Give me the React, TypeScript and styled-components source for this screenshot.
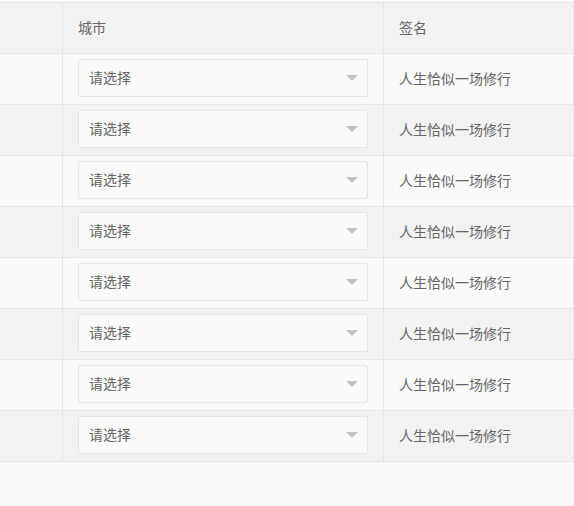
import React from 'react';
import styled, { createGlobalStyle } from 'styled-components';

const borderColor = '#e6e6e6';
const textColor = '#666';

const GlobalStyle = createGlobalStyle`
  html, body {
    margin: 0;
    padding: 0;
    background-color: #fafafa;
  }
  body {
    font-family: "Noto Sans CJK SC", "Noto Sans", sans-serif;
    font-size: 14px;
    color: ${textColor};
  }
`;

const TableWrapper = styled.div`
  margin-top: 2px;
  border-top: 1px solid ${borderColor};
  width: 574px;
  overflow: hidden;
`;

const Row = styled.div<{ $even?: boolean; $head?: boolean }>`
  display: grid;
  grid-template-columns: 63px 321px 190px;
  height: 51px;
  box-sizing: border-box;
  border-bottom: 1px solid ${borderColor};
  background-color: ${(p) => (p.$head || p.$even ? '#f2f2f2' : 'transparent')};
`;

const Cell = styled.div<{ $top?: boolean }>`
  box-sizing: border-box;
  border-right: 1px solid ${borderColor};
  padding: ${(p) => (p.$top ? '5px 15px 0' : '0 15px 2px')};
  display: flex;
  align-items: ${(p) => (p.$top ? 'flex-start' : 'center')};
  line-height: 20px;
  white-space: nowrap;
  overflow: hidden;
`;

const Select = styled.div`
  position: relative;
  box-sizing: border-box;
  width: 290px;
  height: 38px;
  border: 1px solid ${borderColor};
  border-radius: 2px;
  background-color: #fafafa;
  padding: 0 0 2px 10px;
  display: flex;
  align-items: center;
  color: ${textColor};
  cursor: pointer;
`;

const Arrow = styled.i`
  position: absolute;
  right: 9px;
  top: 50%;
  margin-top: -3px;
  width: 0;
  height: 0;
  border-style: solid;
  border-width: 6px 6px 0;
  border-color: #c2c2c2 transparent transparent;
`;

const rows = Array.from({ length: 8 }, (_, i) => i);

export default function App() {
  return (
    <>
      <GlobalStyle />
      <TableWrapper>
        <Row $head>
          <Cell />
          <Cell>城市</Cell>
          <Cell>签名</Cell>
        </Row>
        {rows.map((i) => (
          <Row key={i} $even={i % 2 === 1}>
            <Cell />
            <Cell $top>
              <Select>
                请选择
                <Arrow />
              </Select>
            </Cell>
            <Cell>人生恰似一场修行</Cell>
          </Row>
        ))}
      </TableWrapper>
    </>
  );
}
